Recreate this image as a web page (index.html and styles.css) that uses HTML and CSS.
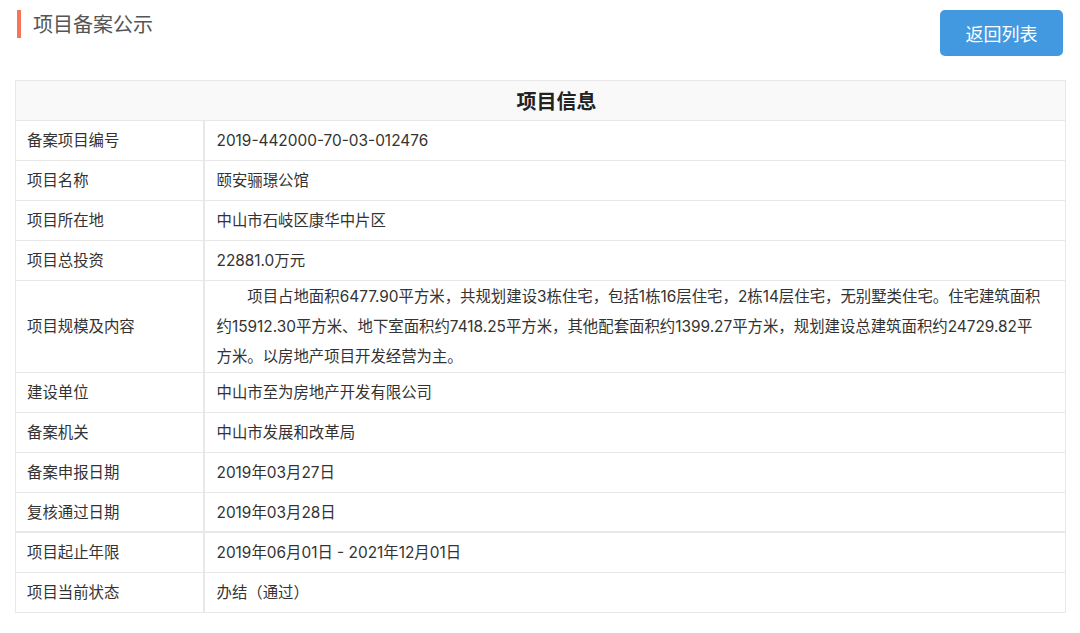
FILE: index.html
```html
<!DOCTYPE html>
<html lang="zh-CN">
<head>
<meta charset="utf-8">
<title>项目备案公示</title>
<link rel="stylesheet" href="styles.css">
</head>
<body>
<div class="page">
  <div class="topbar">
    <h1 class="title">项目备案公示</h1>
    <button class="back-btn" type="button">返回列表</button>
  </div>
  <table class="info">
    <colgroup><col class="col-label"><col class="col-value"></colgroup>
    <thead>
      <tr><th colspan="2">项目信息</th></tr>
    </thead>
    <tbody>
      <tr><td class="label">备案项目编号</td><td>2019-442000-70-03-012476</td></tr>
      <tr><td class="label">项目名称</td><td>颐安骊璟公馆</td></tr>
      <tr><td class="label">项目所在地</td><td>中山市石岐区康华中片区</td></tr>
      <tr><td class="label">项目总投资</td><td>22881.0万元</td></tr>
      <tr><td class="label">项目规模及内容</td><td class="para">项目占地面积6477.90平方米，共规划建设3栋住宅，包括1栋16层住宅，2栋14层住宅，无别墅类住宅。住宅建筑面积约15912.30平方米、地下室面积约7418.25平方米，其他配套面积约1399.27平方米，规划建设总建筑面积约24729.82平方米。以房地产项目开发经营为主。</td></tr>
      <tr><td class="label">建设单位</td><td>中山市至为房地产开发有限公司</td></tr>
      <tr><td class="label">备案机关</td><td>中山市发展和改革局</td></tr>
      <tr><td class="label">备案申报日期</td><td>2019年03月27日</td></tr>
      <tr class="thick"><td class="label">复核通过日期</td><td>2019年03月28日</td></tr>
      <tr><td class="label">项目起止年限</td><td>2019年06月01日 - 2021年12月01日</td></tr>
      <tr><td class="label">项目当前状态</td><td>办结（通过）</td></tr>
    </tbody>
  </table>
</div>
</body>
</html>
```
FILE: styles.css
```css
html, body {
  margin: 0;
  padding: 0;
  background: #fff;
}
body {
  font-family: "Inter", "Noto Sans CJK SC", sans-serif;
  color: #333;
}
.page {
  padding: 10px 14px 0 15px;
}
.topbar {
  display: flex;
  justify-content: space-between;
  align-items: flex-start;
  height: 70px;
}
.title {
  margin: 0 0 0 2px;
  padding-left: 12px;
  border-left: 4px solid #f7735a;
  font-family: "Noto Sans CJK SC", sans-serif;
  font-size: 20px;
  font-weight: normal;
  line-height: 28px;
  height: 28px;
  color: #555;
}
.back-btn {
  margin-right: 3px;
  width: 123px;
  height: 46px;
  border: none;
  border-radius: 5px;
  background: #4399e0;
  color: #fff;
  font-family: "Noto Sans CJK SC", sans-serif;
  font-size: 18px;
  padding: 0;
}
.info {
  width: 1051px;
  border-collapse: collapse;
  border: 1px solid #e8e8e8;
  font-size: 15.4px;
}
.col-label { width: 188px; }
.info th {
  height: 39px;
  padding: 0 0 0 32px;
  background: #f9f9f9;
  font-family: "Noto Sans CJK SC", sans-serif;
  font-size: 20px;
  font-weight: bold;
  color: #222;
  border-bottom: 1px solid #e8e8e8;
}
.info td {
  padding: 5px 12px 4px 12px;
  line-height: 30px;
  border-bottom: 1px solid #e8e8e8;
  vertical-align: middle;
}
.info td.label {
  padding-left: 11px;
  border-right: 2px solid #e8e8e8;
}
.info td.para {
  text-indent: 2em;
  padding-top: 1px;
  padding-right: 21px;
  padding-bottom: 0;
}
.info tr.thick td {
  padding-bottom: 3px;
  border-bottom-width: 2px;
}
```
